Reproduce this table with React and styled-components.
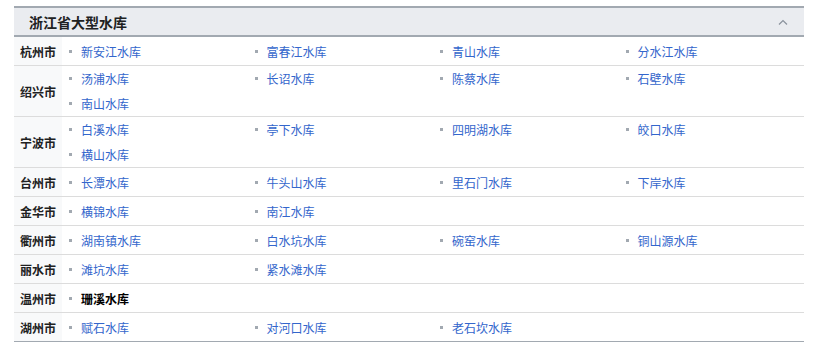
import React from "react";
import styled, { createGlobalStyle } from "styled-components";

const data = [
  { city: "杭州市", items: ["新安江水库", "富春江水库", "青山水库", "分水江水库"] },
  { city: "绍兴市", items: ["汤浦水库", "长诏水库", "陈蔡水库", "石壁水库", "南山水库"] },
  { city: "宁波市", items: ["白溪水库", "亭下水库", "四明湖水库", "皎口水库", "横山水库"] },
  { city: "台州市", items: ["长潭水库", "牛头山水库", "里石门水库", "下岸水库"] },
  { city: "金华市", items: ["横锦水库", "南江水库"] },
  { city: "衢州市", items: ["湖南镇水库", "白水坑水库", "碗窑水库", "铜山源水库"] },
  { city: "丽水市", items: ["滩坑水库", "紧水滩水库"] },
  { city: "温州市", items: ["珊溪水库"], self: "珊溪水库" },
  { city: "湖州市", items: ["赋石水库", "对河口水库", "老石坎水库"] },
];

const Global = createGlobalStyle`
  body {
    margin: 0;
    background: #fff;
    font-family: "Noto Sans CJK SC", "Liberation Sans", sans-serif;
  }
`;

const Page = styled.div`
  padding: 6px 13px 0 14px;
`;

const Navbox = styled.div`
  border-top: 2px solid #a2a9b1;
  border-bottom: 1px solid #a2a9b1;
`;

const Header = styled.div`
  display: flex;
  align-items: center;
  justify-content: space-between;
  height: 27px;
  padding: 0 16px 0 15px;
  background: #eaecf0;
  border-bottom: 2px solid #a2a9b1;
`;

const Title = styled.div`
  font-size: 14px;
  font-weight: bold;
  color: #202122;
`;

const Row = styled.div`
  display: grid;
  grid-template-columns: 48px 1fr;
  border-top: ${(p) => (p.first ? "none" : "1px solid #dcdcdc")};
`;

const City = styled.div`
  display: flex;
  align-items: center;
  justify-content: center;
  background: #f8f9fa;
  font-size: 12px;
  font-weight: bold;
  color: #202122;
`;

const List = styled.ul`
  display: grid;
  grid-template-columns: repeat(4, 185.5px);
  align-content: center;
  min-height: 28px;
  margin: 0;
  padding: 0 0 0 1px;
  list-style: none;
`;

const Item = styled.li`
  display: flex;
  align-items: center;
  height: 25px;
  padding-left: 6px;
  font-size: 12px;
  &::before {
    content: "";
    width: 3px;
    height: 3px;
    margin-right: 9px;
    background: #a2a9b1;
  }
`;

const Link = styled.span`
  color: ${(p) => (p.self ? "#000" : "#3366cc")};
  font-weight: ${(p) => (p.self ? "bold" : "normal")};
`;

export default function App() {
  return (
    <Page>
      <Global />
      <Navbox>
        <Header>
          <Title>浙江省大型水库</Title>
          <svg width="10" height="6" viewBox="0 0 10 6">
            <path d="M1 5.5 L5 1.5 L9 5.5" fill="none" stroke="#8a929c" strokeWidth="1.2" />
          </svg>
        </Header>
        {data.map((r, i) => (
          <Row key={r.city} first={i === 0}>
            <City>{r.city}</City>
            <List>
              {r.items.map((it) => (
                <Item key={it}>
                  <Link self={r.self === it}>{it}</Link>
                </Item>
              ))}
            </List>
          </Row>
        ))}
      </Navbox>
    </Page>
  );
}
